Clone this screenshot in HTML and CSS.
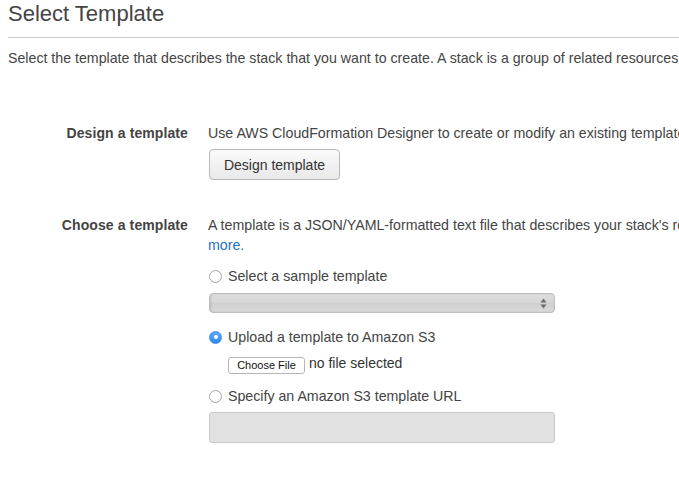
FILE: index.html
```html
<!DOCTYPE html>
<html>
<head>
<meta charset="utf-8">
<link rel="stylesheet" href="styles.css">
</head>
<body>
<div class="page">
  <h1 class="title">Select Template</h1>
  <p class="intro">Select the template that describes the stack that you want to create. A stack is a group of related resources that you manage as a single unit.</p>
  <div class="form">
    <div class="row">
      <div class="label">Design a template</div>
      <div class="field">
        <div class="text">Use AWS CloudFormation Designer to create or modify an existing template. <a class="link" href="#">Learn more.</a></div>
        <span class="btn">Design template</span>
      </div>
    </div>
    <div class="row row-choose">
      <div class="label">Choose a template</div>
      <div class="field">
        <div class="text">A template is a JSON/YAML-formatted text file that describes your stack's resources. <a class="link" href="#">Learn more.</a></div>
        <div class="radio-line first">
          <span class="radio"></span><span>Select a sample template</span>
        </div>
        <div class="select">
          <svg class="arrows" width="7" height="11" viewBox="0 0 7 11"><path d="M3.5 0.5 L6.5 4.5 L0.5 4.5 Z" fill="#6d6d6d"/><path d="M3.5 10.5 L6.5 6.5 L0.5 6.5 Z" fill="#6d6d6d"/></svg>
        </div>
        <div class="radio-line second">
          <span class="radio checked"></span><span>Upload a template to Amazon S3</span>
        </div>
        <div class="file-line">
          <span class="file-btn">Choose File</span><span class="file-name">no file selected</span>
        </div>
        <div class="radio-line third">
          <span class="radio"></span><span>Specify an Amazon S3 template URL</span>
        </div>
        <div class="url-input"></div>
      </div>
    </div>
  </div>
</div>
</body>
</html>
```

FILE: styles.css
```css
html, body {
  margin: 0;
  padding: 0;
  background: #ffffff;
  overflow: hidden;
}

body {
  width: 679px;
  height: 481px;
  font-family: "Liberation Sans", Arial, sans-serif;
  color: #444444;
  font-size: 14.2px;
}

.page {
  width: 1000px;
  padding: 0 8px;
}

.title {
  margin: 0;
  font-size: 22px;
  font-weight: normal;
  line-height: 28px;
  padding-bottom: 9px;
  border-bottom: 1px solid #cfcfcf;
  color: #444444;
}

.intro {
  margin: 10px 0 0 0;
  line-height: 20px;
  white-space: nowrap;
}

.form {
  margin-top: 55px;
  display: flex;
  flex-direction: column;
}

.row {
  display: grid;
  grid-template-columns: 180px 600px;
  column-gap: 20px;
}

.row-choose {
  margin-top: 35px;
}

.label {
  text-align: right;
  font-weight: bold;
  font-size: 14px;
  letter-spacing: 0.1px;
  line-height: 20px;
  color: #444444;
}

.field {
  display: flex;
  flex-direction: column;
  align-items: flex-start;
}

.text {
  line-height: 20px;
}

.link {
  color: #1f72c4;
  text-decoration: none;
}

.btn {
  margin-top: 6px;
  margin-left: 1px;
  box-sizing: border-box;
  height: 31px;
  width: 131px;
  display: inline-flex;
  align-items: center;
  justify-content: center;
  font-size: 14px;
  color: #333333;
  border: 1px solid #b8b8b8;
  border-radius: 4px;
  background: linear-gradient(#fafafa, #e9e9e9);
}

.radio-line {
  display: flex;
  align-items: center;
  line-height: 20px;
  font-size: 14.2px;
}

.radio-line.first { margin-top: 11px; }
.radio-line.second { margin-top: 14px; }
.radio-line.third { margin-top: 11px; }

.radio {
  box-sizing: border-box;
  width: 13px;
  height: 13px;
  margin-left: 1px;
  margin-right: 6px;
  border-radius: 50%;
  border: 1px solid #a6a6a6;
  background: #ffffff;
  display: inline-flex;
  align-items: center;
  justify-content: center;
}

.radio.checked {
  border-color: #3a8ef0;
  background: linear-gradient(#63aaf7, #2f86ef);
}

.radio.checked::after {
  content: "";
  width: 4px;
  height: 4px;
  border-radius: 50%;
  background: #ffffff;
}

.select {
  margin-top: 7px;
  margin-left: 1px;
  box-sizing: border-box;
  width: 346px;
  height: 20px;
  border: 1px solid #bdbdbd;
  border-radius: 4px;
  background: linear-gradient(#dedede, #d6d6d6 50%, #cfcfcf 51%, #dadada);
  box-shadow: inset 1px 0 2px rgba(0,0,0,0.12);
  display: flex;
  align-items: center;
  justify-content: flex-end;
  padding-right: 7px;
}

.file-line {
  margin-top: 8px;
  margin-left: 20px;
  height: 20px;
  display: flex;
  align-items: center;
}

.file-btn {
  box-sizing: border-box;
  height: 17px;
  width: 77px;
  display: inline-flex;
  align-items: center;
  justify-content: center;
  font-size: 11px;
  color: #111111;
  border: 1px solid #b5b5b5;
  border-radius: 3px;
  background: #ffffff;
}

.file-name {
  margin-left: 4px;
  font-size: 14px;
  color: #333333;
  position: relative;
  top: -2px;
}

.url-input {
  margin-top: 6px;
  margin-left: 1px;
  box-sizing: border-box;
  width: 346px;
  height: 31px;
  border: 1px solid #c9c9c9;
  border-radius: 3px;
  background: #e1e1e1;
}
```
